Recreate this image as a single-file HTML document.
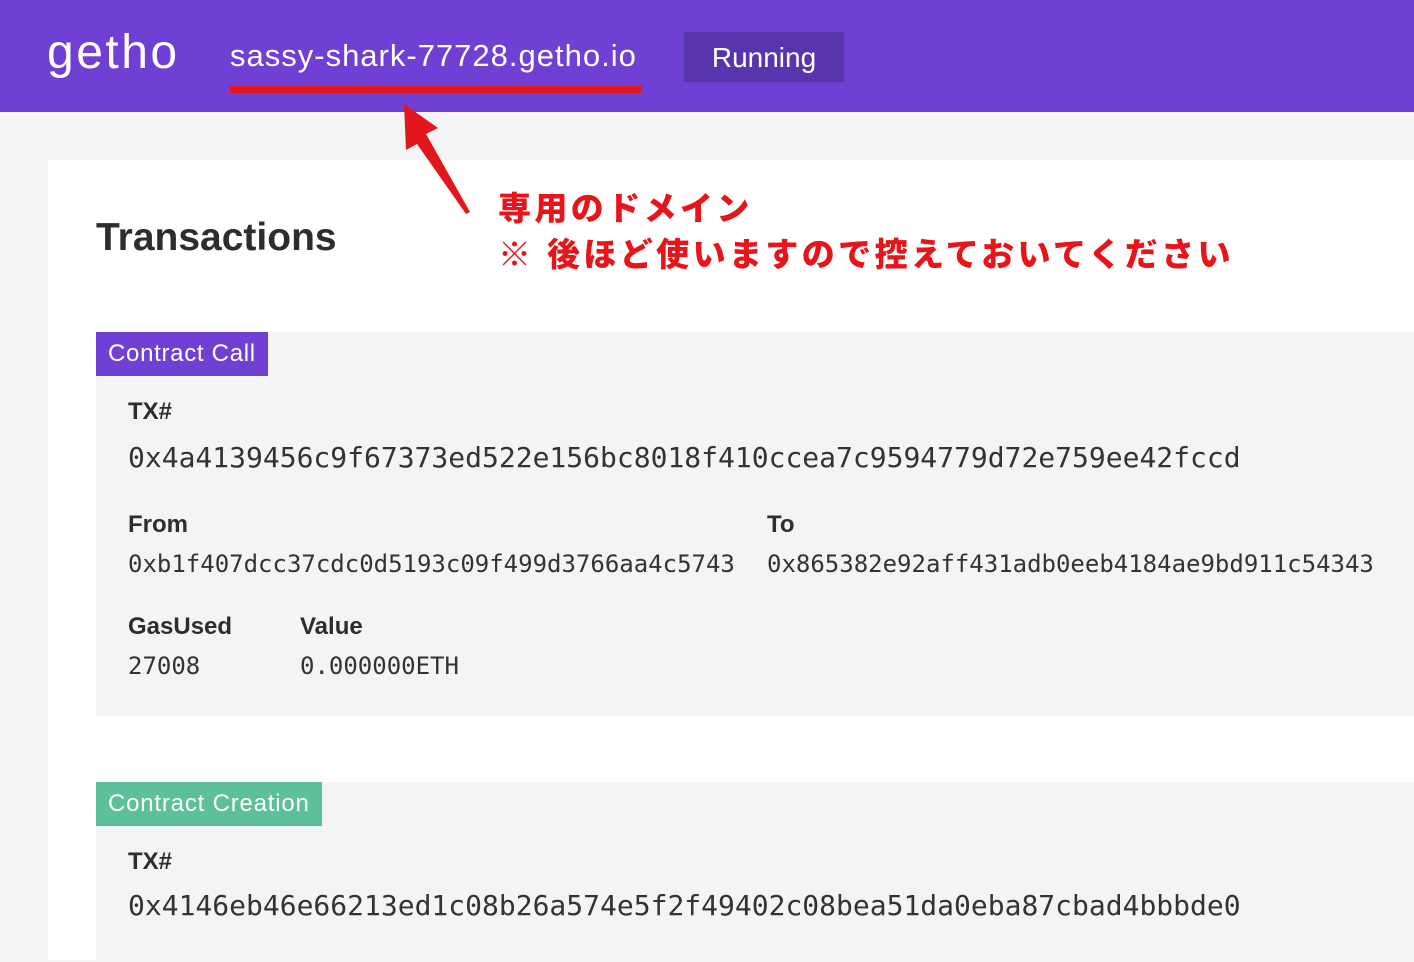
<!DOCTYPE html>
<html><head><meta charset="utf-8"><style>
*{margin:0;padding:0;box-sizing:border-box}
body{width:1414px;height:948px;overflow:hidden;background:#f3f4f6;font-family:"Liberation Sans","Noto Sans CJK JP",sans-serif;position:relative;color:#2d2d2d}
.hdr{position:absolute;left:0;top:0;width:1414px;height:112px;background:#6f40d3}
.abs{position:absolute;white-space:nowrap}
.mono{font-family:"DejaVu Sans Mono",monospace;color:#333}
.card{position:absolute;left:48px;top:160px;width:1366px;height:800px;background:#fff}
.sec{position:absolute;left:96px;width:1318px;background:#f3f4f6}
.lbl{font-weight:bold;font-size:24px;color:#2d2d2d}
.red{color:#e8141a;font-weight:900;font-size:33px;letter-spacing:3.4px}
</style></head><body>
<div class="hdr"></div>
<div class="abs" style="left:47px;top:25px;font-size:48px;color:#fff;letter-spacing:2.5px">getho</div>
<div class="abs" style="left:230px;top:38px;font-size:31px;color:#fff;letter-spacing:1px">sassy-shark-77728.getho.io</div>
<div class="abs" style="left:230px;top:86px;width:412px;height:7px;background:#e3161b"></div>
<div class="abs" style="left:684px;top:32px;width:160px;height:50px;background:#5835ad;color:#fff;font-size:28px;text-align:center;line-height:52px">Running</div>
<div class="card"></div>
<div class="abs" style="left:96px;top:216px;font-size:39px;font-weight:bold;color:#2d2d2d">Transactions</div>
<div class="sec" style="top:332px;height:384px"></div>
<div class="abs" style="left:96px;top:332px;width:172px;height:44px;background:#6f40d3;color:#fff;font-size:24px;line-height:44px;padding-left:12px;letter-spacing:0.7px">Contract Call</div>
<div class="abs lbl" style="left:128px;top:398px">TX#</div>
<div class="abs mono" style="left:128px;top:441px;font-size:28px">0x4a4139456c9f67373ed522e156bc8018f410ccea7c9594779d72e759ee42fccd</div>
<div class="abs lbl" style="left:128px;top:511px">From</div>
<div class="abs lbl" style="left:767px;top:511px">To</div>
<div class="abs mono" style="left:128px;top:550px;font-size:24px">0xb1f407dcc37cdc0d5193c09f499d3766aa4c5743</div>
<div class="abs mono" style="left:767px;top:550px;font-size:24px">0x865382e92aff431adb0eeb4184ae9bd911c54343</div>
<div class="abs lbl" style="left:128px;top:613px">GasUsed</div>
<div class="abs lbl" style="left:300px;top:613px">Value</div>
<div class="abs mono" style="left:128px;top:652px;font-size:24px">27008</div>
<div class="abs mono" style="left:300px;top:652px;font-size:24px">0.000000ETH</div>
<div class="sec" style="top:782px;height:180px"></div>
<div class="abs" style="left:96px;top:782px;width:226px;height:44px;background:#5cc09a;color:#fff;font-size:24px;line-height:44px;padding-left:12px;letter-spacing:0.8px">Contract Creation</div>
<div class="abs lbl" style="left:128px;top:848px">TX#</div>
<div class="abs mono" style="left:128px;top:889px;font-size:28px">0x4146eb46e66213ed1c08b26a574e5f2f49402c08bea51da0eba87cbad4bbbde0</div>
<svg class="abs" style="left:400px;top:100px" width="80" height="120"><polygon points="4,4 6,50 17,44 66,114 70,112 26,34 38,28" fill="#e3161b"/></svg>
<div class="abs red" style="left:498px;top:182px">専用のドメイン</div>
<div class="abs red" style="left:498px;top:228px">※ 後ほど使いますので控えておいてください</div>
</body></html>
